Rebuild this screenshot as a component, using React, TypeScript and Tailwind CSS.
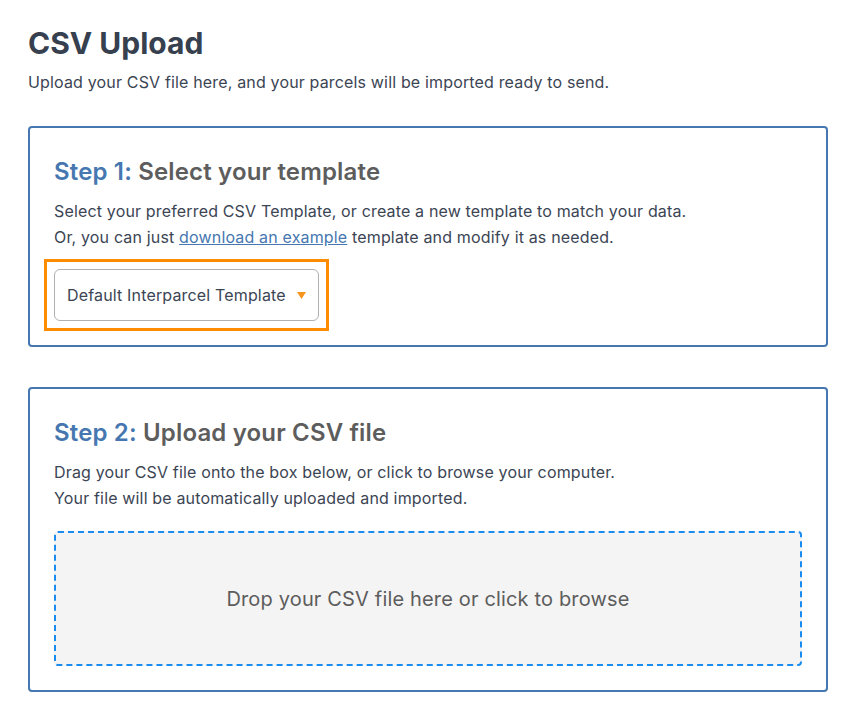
import React from "react";

export default function App() {
  return (
    <div className="min-h-screen bg-white px-[28px] pt-[24px] pb-8 text-[#374151] tracking-[0.01em]" style={{ fontFamily: "Inter, 'Noto Sans', sans-serif" }}>
      <h1 className="text-[30px] font-bold leading-[38px] tracking-normal text-[#36404e]">CSV Upload</h1>
      <p className="mt-[8px] text-[16px] leading-[24px] text-[#3b4554]">
        Upload your CSV file here, and your parcels will be imported ready to send.
      </p>

      <section className="mt-[32px] w-[800px] rounded-[4px] border-2 border-[#4677b0] p-[24px]">
        <h2 className="text-[24px] font-semibold leading-[40px] text-[#5d5d5d]">
          <span className="text-[#4677b0]">Step 1:</span> Select your template
        </h2>
        <p className="mt-[6px] text-[16px] leading-[26px] text-[#3b4554]">
          Select your preferred CSV Template, or create a new template to match your data.
          <br />
          Or, you can just{" "}
          <a href="#" className="text-[#4677b0] underline">download an example</a>{" "}
          template and modify it as needed.
        </p>
        <div className="mt-[19px] flex">
          <div className="outline-3 outline-offset-[7px] outline-[#ff8c00]">
            <button className="flex h-[52px] items-center gap-[11px] rounded-[6px] border border-[#b0b0b0] bg-white pl-[12px] pr-[12px] text-[16px] tracking-[0.01em] text-[#3b4554]">
              <span>Default Interparcel Template</span>
              <svg width="9" height="7" viewBox="0 0 9 7"><path d="M0 0h9L4.5 7z" fill="#f7941d" /></svg>
            </button>
          </div>
        </div>
      </section>

      <section className="mt-[40px] w-[800px] rounded-[4px] border-2 border-[#4677b0] p-[24px]">
        <h2 className="text-[24px] font-semibold leading-[40px] text-[#5d5d5d]">
          <span className="text-[#4677b0]">Step 2:</span> Upload your CSV file
        </h2>
        <p className="mt-[6px] text-[16px] leading-[26px] text-[#3b4554]">
          Drag your CSV file onto the box below, or click to browse your computer.
          <br />
          Your file will be automatically uploaded and imported.
        </p>
        <div className="mt-[20px] flex h-[135px] items-center justify-center rounded-[4px] border-2 border-dashed border-[#1a8cf0] bg-[#f4f4f4]">
          <span className="text-[20px] text-[#5d5d5d]">Drop your CSV file here or click to browse</span>
        </div>
      </section>
    </div>
  );
}
